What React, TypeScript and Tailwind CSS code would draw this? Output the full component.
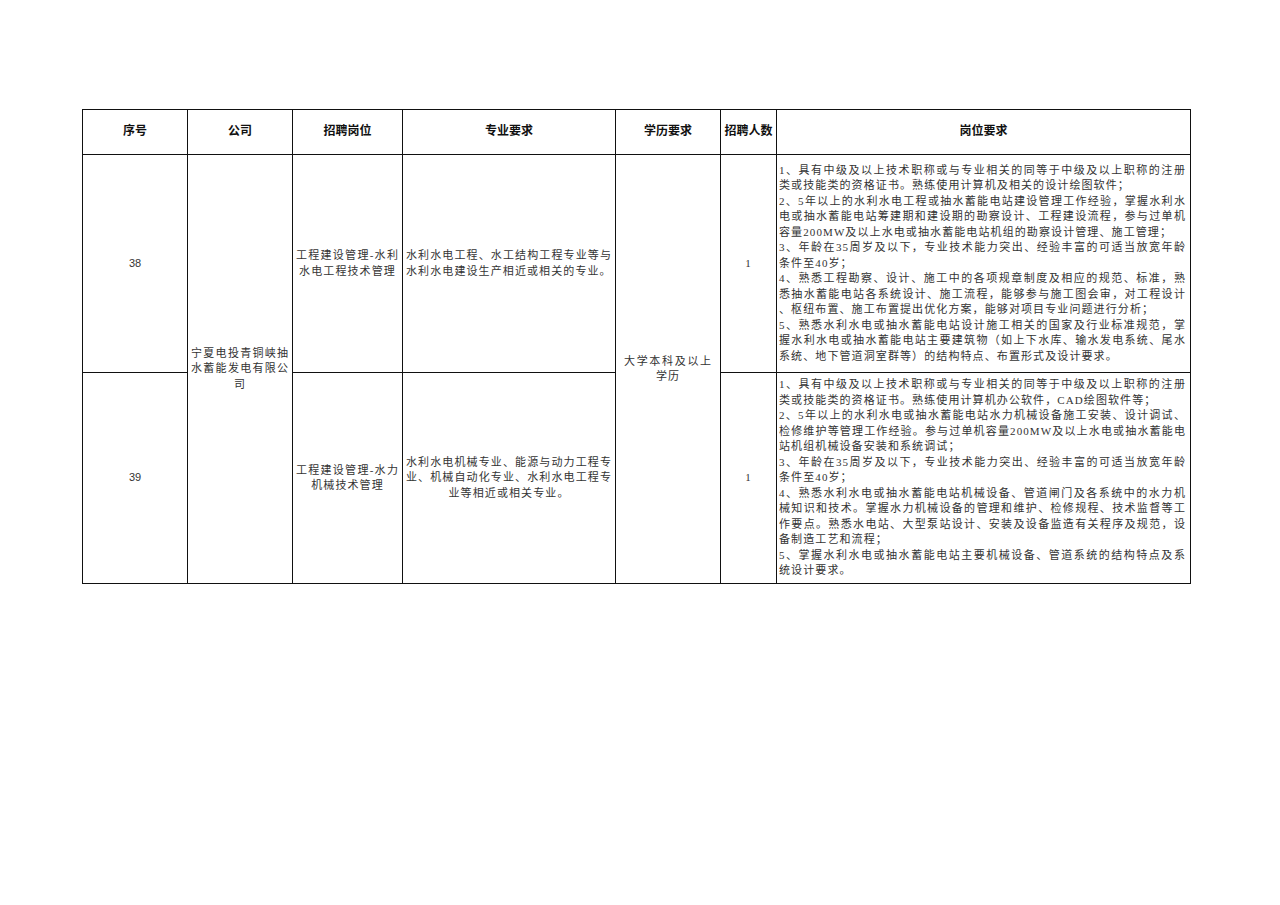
import React from 'react';

const serif = '"Liberation Serif", "Noto Sans CJK SC", serif';
const sans = '"Liberation Sans", "Noto Sans CJK SC", sans-serif';

// paragraphs: every line but the last one is justified across the cell
function Para({ lines, align = 'left' }: { lines: string[]; align?: 'left' | 'center' }) {
  return (
    <>
      {lines.map((t, i) =>
        i < lines.length - 1 ? (
          <div key={i} className="text-justify [text-align-last:justify]">
            {t}
          </div>
        ) : (
          <div key={i} className={align === 'center' ? 'text-center' : 'text-left'}>
            {t}
          </div>
        ),
      )}
    </>
  );
}

const duties38 = [
  ['1、具有中级及以上技术职称或与专业相关的同等于中级及以上职称的注册', '类或技能类的资格证书。熟练使用计算机及相关的设计绘图软件；'],
  [
    '2、5年以上的水利水电工程或抽水蓄能电站建设管理工作经验，掌握水利水',
    '电或抽水蓄能电站筹建期和建设期的勘察设计、工程建设流程，参与过单机',
    '容量200MW及以上水电或抽水蓄能电站机组的勘察设计管理、施工管理；',
  ],
  ['3、年龄在35周岁及以下，专业技术能力突出、经验丰富的可适当放宽年龄', '条件至40岁；'],
  [
    '4、熟悉工程勘察、设计、施工中的各项规章制度及相应的规范、标准，熟',
    '悉抽水蓄能电站各系统设计、施工流程，能够参与施工图会审，对工程设计',
    '、枢纽布置、施工布置提出优化方案，能够对项目专业问题进行分析；',
  ],
  [
    '5、熟悉水利水电或抽水蓄能电站设计施工相关的国家及行业标准规范，掌',
    '握水利水电或抽水蓄能电站主要建筑物（如上下水库、输水发电系统、尾水',
    '系统、地下管道洞室群等）的结构特点、布置形式及设计要求。',
  ],
];

const duties39 = [
  ['1、具有中级及以上技术职称或与专业相关的同等于中级及以上职称的注册', '类或技能类的资格证书。熟练使用计算机办公软件，CAD绘图软件等；'],
  [
    '2、5年以上的水利水电或抽水蓄能电站水力机械设备施工安装、设计调试、',
    '检修维护等管理工作经验。参与过单机容量200MW及以上水电或抽水蓄能电',
    '站机组机械设备安装和系统调试；',
  ],
  ['3、年龄在35周岁及以下，专业技术能力突出、经验丰富的可适当放宽年龄', '条件至40岁；'],
  [
    '4、熟悉水利水电或抽水蓄能电站机械设备、管道闸门及各系统中的水力机',
    '械知识和技术。掌握水力机械设备的管理和维护、检修规程、技术监督等工',
    '作要点。熟悉水电站、大型泵站设计、安装及设备监造有关程序及规范，设',
    '备制造工艺和流程；',
  ],
  ['5、掌握水利水电或抽水蓄能电站主要机械设备、管道系统的结构特点及系', '统设计要求。'],
];

const headers = ['序号', '公司', '招聘岗位', '专业要求', '学历要求', '招聘人数', '岗位要求'];
const widths = ['w-[105px]', 'w-[105px]', 'w-[110px]', 'w-[213px]', 'w-[105px]', 'w-[56px]', 'w-[414px]'];

const td = 'border-[1.5px] border-[#111] align-middle';

export default function App() {
  return (
    <div className="min-h-[905px] w-[1280px] bg-white pt-[109px] pl-[82px]">
      <table
        className="w-[1108px] table-fixed border-collapse text-[11px] leading-[15.5px] tracking-[1.1px] text-[#333]"
        style={{ fontFamily: serif }}
      >
        <colgroup>
          {widths.map((w, i) => (
            <col key={i} className={w} />
          ))}
        </colgroup>
        <thead>
          <tr className="h-[45px]">
            {headers.map((h) => (
              <th
                key={h}
                className={`${td} text-center text-[12px] font-bold tracking-normal text-[#111]`}
                style={{ fontFamily: sans }}
              >
                {h}
              </th>
            ))}
          </tr>
        </thead>
        <tbody>
          {/* 38 */}
          <tr className="h-[218px]">
            <td className={`${td} text-center tracking-normal`} style={{ fontFamily: sans }}>
              38
            </td>
            <td rowSpan={2} className={`${td} px-[3px] tracking-[0.9px]`}>
              <Para lines={['宁夏电投青铜峡抽', '水蓄能发电有限公', '司']} align="center" />
            </td>
            <td className={`${td} px-[3px]`}>
              <Para lines={['工程建设管理-水利', '水电工程技术管理']} align="center" />
            </td>
            <td className={`${td} px-[3px]`}>
              <Para lines={['水利水电工程、水工结构工程专业等与', '水利水电建设生产相近或相关的专业。']} />
            </td>
            <td rowSpan={2} className={`${td} px-[8px] tracking-[0.9px]`}>
              <Para lines={['大学本科及以上', '学历']} align="center" />
            </td>
            <td className={`${td} text-center`}>1</td>
            <td className={`${td} pl-[2px] pr-[4px]`}>
              {duties38.map((p, i) => (
                <Para key={i} lines={p} />
              ))}
            </td>
          </tr>
          {/* 39 */}
          <tr className="h-[211px]">
            <td className={`${td} text-center tracking-normal`} style={{ fontFamily: sans }}>
              39
            </td>
            <td className={`${td} px-[3px]`}>
              <Para lines={['工程建设管理-水力', '机械技术管理']} align="center" />
            </td>
            <td className={`${td} px-[3px]`}>
              <Para
                lines={['水利水电机械专业、能源与动力工程专', '业、机械自动化专业、水利水电工程专', '业等相近或相关专业。']}
                align="center"
              />
            </td>
            <td className={`${td} text-center`}>1</td>
            <td className={`${td} pl-[2px] pr-[4px]`}>
              {duties39.map((p, i) => (
                <Para key={i} lines={p} />
              ))}
            </td>
          </tr>
        </tbody>
      </table>
    </div>
  );
}
